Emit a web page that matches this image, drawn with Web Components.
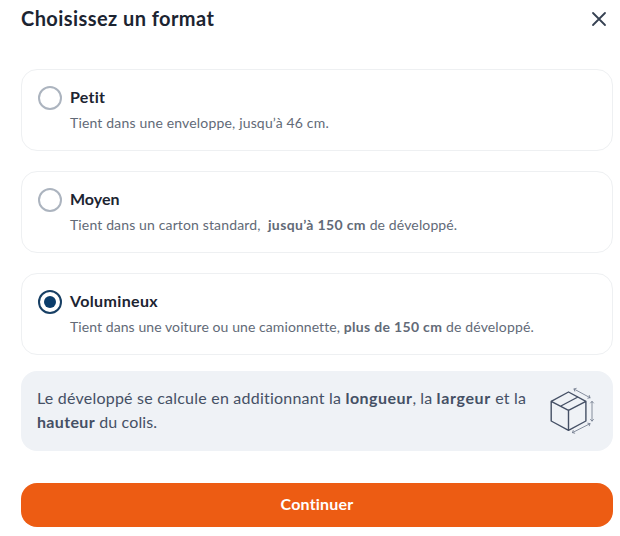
<!DOCTYPE html>
<html lang="fr">
<head>
<meta charset="utf-8">
<title>Choisissez un format</title>
<style>
body{margin:0;background:#fff;font-family:Lato,"Open Sans",sans-serif;color:#1c2431}
b{font-weight:700}
</style>
</head>
<body>
<format-dialog>
  <dialog-header slot="header">Choisissez un format</dialog-header>
  <format-option label="Petit" style="--label-spacing:.25px"><span style="letter-spacing:.17px">Tient dans une enveloppe, jusqu’à 46 cm.</span></format-option>
  <format-option label="Moyen" style="--label-spacing:0px"><span style="letter-spacing:.14px">Tient dans un carton standard,&nbsp; </span><b style="letter-spacing:.36px">jusqu’à 150 cm</b><span style="letter-spacing:.13px"> de développé.</span></format-option>
  <format-option label="Volumineux" checked><span style="letter-spacing:.08px">Tient dans une voiture ou une camionnette, </span><b style="letter-spacing:.33px">plus de 150 cm</b><span style="letter-spacing:.15px"> de développé.</span></format-option>
  <info-note slot="note"><span style="letter-spacing:.22px">Le développé se calcule en additionnant la </span><b style="letter-spacing:.46px">longueur</b>, la <b style="letter-spacing:.64px">largeur</b><span style="letter-spacing:.22px"> et la </span><br><b style="letter-spacing:.35px">hauteur</b> du colis.</info-note>
  <primary-button slot="action">Continuer</primary-button>
</format-dialog>
<script>
const define = (name, html, setup) => customElements.define(name, class extends HTMLElement {
  connectedCallback() {
    if (this.shadowRoot) return;
    const root = this.attachShadow({ mode: 'open' });
    root.innerHTML = html;
    if (setup) setup(this, root);
  }
});

define('format-dialog', `
<style>
:host{display:flex;flex-direction:column;box-sizing:border-box;height:536px;padding:4px 7px 9px 21px}
.options{display:flex;flex-direction:column;gap:20px;margin:35px 0 16px}
.action{margin-top:32px}
</style>
<slot name="header"></slot>
<div class="options"><slot></slot></div>
<slot name="note"></slot>
<div class="action"><slot name="action"></slot></div>`);

define('dialog-header', `
<style>
:host{display:flex;align-items:center;justify-content:space-between;height:30px;padding-right:2px}
h1{margin:0 0 2px;font-size:20px;line-height:28px;font-weight:700;letter-spacing:.43px}
button{display:flex;padding:0;border:0;background:none;color:#364152}
</style>
<h1><slot></slot></h1>
<button aria-label="Fermer"><svg width="24" height="24" fill="none" stroke="currentColor" stroke-width="1.8" stroke-linecap="round"><path d="M6 6l12 12M18 6L6 18"/></svg></button>`);

define('format-option', `
<style>
:host{display:flex;gap:8px;box-sizing:border-box;height:82px;padding:16px;border:1px solid #eef0f2;border-radius:16px}
.radio{flex:none;display:grid;place-items:center;box-sizing:border-box;width:24px;height:24px;border:2px solid #acb4bf;border-radius:50%}
:host([checked]) .radio{border-color:#173f64}
:host([checked]) .radio::after{content:"";width:12px;height:12px;border-radius:50%;background:#0b3d6b}
.label{margin-top:-1px;font-size:16px;line-height:24px;font-weight:700;letter-spacing:var(--label-spacing,.36px)}
.text{margin-top:4px;font-size:14px;line-height:20px;color:#626a77;white-space:nowrap}
</style>
<div class="radio"></div>
<div><div class="label"></div><div class="text"><slot></slot></div></div>`,
(host, root) => { root.querySelector('.label').textContent = host.getAttribute('label'); });

define('info-note', `
<style>
:host{display:flex;justify-content:space-between;padding:16px;border-radius:16px;background:#eff2f6;color:#455065}
.text{margin-top:-1px;font-size:16px;line-height:24px;letter-spacing:.12px;white-space:nowrap}
</style>
<div class="text"><slot></slot></div>
<parcel-icon></parcel-icon>`);

define('parcel-icon', `
<style>:host{display:block;width:48px;height:48px}svg{display:block;overflow:visible}</style>
<svg width="48" height="48" fill="none" stroke="#455065" stroke-linejoin="round" stroke-linecap="round">
<path stroke-width="1.4" d="M19.5 5L36.9 14.3V34L19.5 43.3L2.2 34V14.3ZM2.2 14.3L19.5 23.3L36.9 14.3M19.5 23.3V43.3M11.9 19L28.9 10"/>
<path stroke-width=".8" stroke="#697386" d="M25 2L41 10.7M27.2 1.4L25 2L25.7 4.1M40.3 8.5L41 10.7L38.8 11.2M43 14.5V34M41.5 16L43 14.4L44.5 16M41.5 32.5L43 34.1L44.5 32.5M23.5 45.6L41 36.7M24.2 43.5L23.5 45.6L25.7 46.2M38.8 36.2L41 36.7L40.3 38.8"/>
</svg>`);

define('primary-button', `
<style>
:host{display:block}
button{display:block;width:100%;height:44px;padding:0 0 2px;border:0;border-radius:16px;background:#ed5c13;color:#fff;font:700 16px/24px Lato,"Open Sans",sans-serif;letter-spacing:.2px}
</style>
<button><slot></slot></button>`);
</script>
</body>
</html>
